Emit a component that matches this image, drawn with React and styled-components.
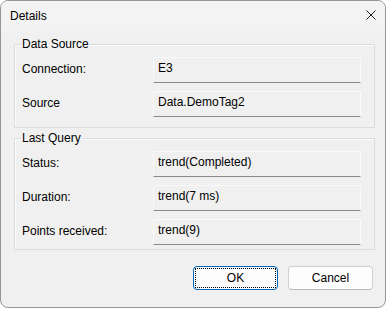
import React from 'react'
import styled, { createGlobalStyle } from 'styled-components'

const Global = createGlobalStyle`
  html, body {
    margin: 0;
    padding: 0;
    background: #ffffff;
  }
  body {
    font-family: "Liberation Sans", Arial, sans-serif;
    font-size: 12px;
    color: #000;
  }
`

const source = [
  { label: 'Connection:', value: 'E3' },
  { label: 'Source', value: 'Data.DemoTag2' },
]

const query = [
  { label: 'Status:', value: 'trend(Completed)' },
  { label: 'Duration:', value: 'trend(7 ms)' },
  { label: 'Points received:', value: 'trend(9)' },
]

function CloseIcon() {
  return (
    <svg width="10" height="10" viewBox="0 0 10 10">
      <path d="M0.5 0.5 L9.5 9.5 M9.5 0.5 L0.5 9.5" stroke="#1a1a1a" strokeWidth="1" fill="none" />
    </svg>
  )
}

function Group({ title, rows, bottom }) {
  return (
    <Box $bottom={bottom}>
      <Legend>{title}</Legend>
      {rows.map(r => (
        <Row key={r.label}>
          <Label>{r.label}</Label>
          <Field>{r.value}</Field>
        </Row>
      ))}
    </Box>
  )
}

export default function App() {
  return (
    <>
      <Global />
      <Window>
        <TitleBar>
          <Title>Details</Title>
          <CloseBtn>
            <CloseIcon />
          </CloseBtn>
        </TitleBar>
        <Body>
          <Group title="Data Source" rows={source} bottom={10} />
          <Group title="Last Query" rows={query} bottom={4} />
          <Footer>
            <Button $primary>
              <Focus>OK</Focus>
            </Button>
            <Button>Cancel</Button>
          </Footer>
        </Body>
      </Window>
    </>
  )
}

const Window = styled.div`
  width: 386px;
  height: 308px;
  box-sizing: border-box;
  border: 1px solid #959595;
  border-radius: 8px;
  background: #f0f0f0;
  overflow: hidden;
  display: flex;
  flex-direction: column;
`

const TitleBar = styled.div`
  height: 30px;
  flex: none;
  background: #f3f3f3;
  display: flex;
  align-items: center;
  justify-content: space-between;
  padding: 0 0 0 9px;
`

const Title = styled.div`
  line-height: 16px;
`

const CloseBtn = styled.div`
  width: 46px;
  height: 30px;
  display: flex;
  align-items: center;
  justify-content: center;
  margin-top: -2px;
  margin-right: -9px;
`

const Body = styled.div`
  flex: 1;
  padding: 5px 10px 0 13px;
  display: flex;
  flex-direction: column;
`

const Box = styled.fieldset`
  margin: 0 0 2px 0;
  padding: 0 12px ${p => p.$bottom}px 6px;
  border: 1px solid #dcdcdc;
  box-shadow: inset 1px 1px 0 #fbfbfb;
  display: flex;
  flex-direction: column;
  gap: 8px;
  min-width: 0;
`

const Legend = styled.legend`
  padding: 0 1px;
  line-height: 16px;
  margin-bottom: 5px;
`

const Row = styled.div`
  display: grid;
  grid-template-columns: 131px 208px;
  align-items: start;
  padding-left: 1px;
`

const Label = styled.div`
  line-height: 16px;
  padding-top: 4px;
`

const Field = styled.div`
  height: 26px;
  box-sizing: border-box;
  background: #f0f0f0;
  border-top: 1px solid #fafafa;
  border-left: 1px solid #fafafa;
  border-right: 1px solid #fafafa;
  border-bottom: 1px solid #8a8a8a;
  padding: 2px 4px 0;
  line-height: 16px;
  white-space: nowrap;
`

const Footer = styled.div`
  display: flex;
  justify-content: flex-end;
  gap: 10px;
  margin-top: 14px;
  padding-right: 2px;
`

const Button = styled.div`
  width: 85px;
  height: 24px;
  box-sizing: border-box;
  border-radius: 4px;
  background: #fdfdfd;
  border: 1px solid ${p => (p.$primary ? '#0067c0' : '#d0d0d0')};
  border-bottom-color: ${p => (p.$primary ? '#0067c0' : '#b8b8b8')};
  display: flex;
  align-items: center;
  justify-content: center;
  padding: ${p => (p.$primary ? '1px' : '0')};
  line-height: 16px;
`

const Focus = styled.div`
  flex: 1;
  align-self: stretch;
  display: flex;
  align-items: center;
  justify-content: center;
  outline: 1px dotted #000;
  outline-offset: -1px;
`
